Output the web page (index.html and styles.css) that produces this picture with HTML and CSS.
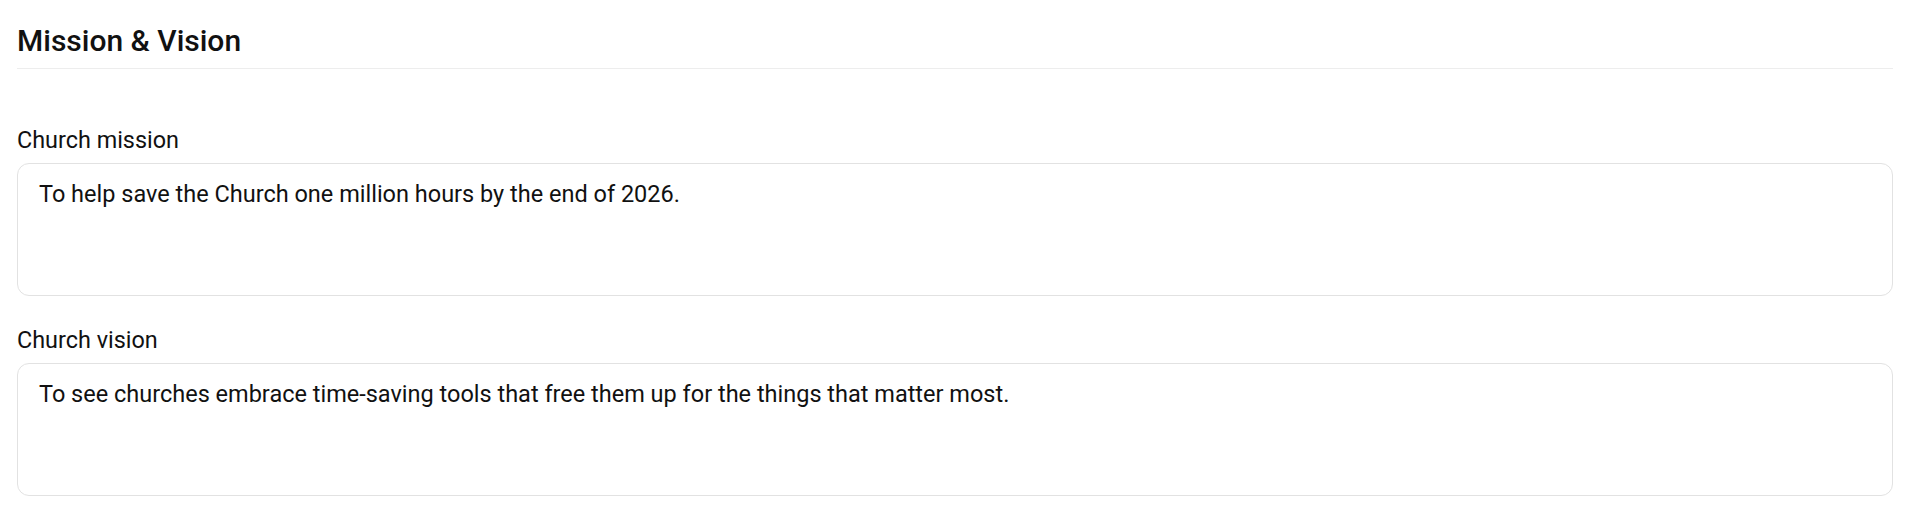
FILE: index.html
```html
<!DOCTYPE html>
<html lang="en">
<head>
  <meta charset="UTF-8">
  <meta name="viewport" content="width=device-width, initial-scale=1.0">
  <title>Mission &amp; Vision</title>
  <link rel="stylesheet" href="styles.css">
</head>
<body>
  <div class="section">
    <h2 class="section-title">Mission &amp; Vision</h2>

    <div class="field first">
      <label for="church-mission">Church mission</label>
      <textarea id="church-mission" readonly>To help save the Church one million hours by the end of 2026.</textarea>
    </div>

    <div class="field">
      <label for="church-vision">Church vision</label>
      <textarea id="church-vision" readonly>To see churches embrace time-saving tools that free them up for the things that matter most.</textarea>
    </div>
  </div>
</body>
</html>
```

FILE: styles.css
```css
body {
  font-family: Roboto, "Noto Sans", Arial, sans-serif;
  background-color: #fff;
  color: #111;
  margin: 0;
  padding: 0;
}
.section {
  padding: 0 27px 0 17px;
}
.section-title {
  margin: 0;
  padding: 23px 0 9px;
  font-size: 30px;
  line-height: 36px;
  font-weight: 500;
  color: #111;
  border-bottom: 1px solid #ededed;
}
.field {
  display: flex;
  flex-direction: column;
  margin-top: 30px;
}
.field.first {
  margin-top: 57px;
}
.field label {
  font-size: 23.4px;
  line-height: 28px;
  margin-bottom: 9px;
}
.field textarea {
  box-sizing: border-box;
  height: 133px;
  padding: 14px 21px;
  font-family: inherit;
  font-size: 23.5px;
  line-height: 32px;
  color: #111;
  background-color: #fff;
  border: 1px solid #e2e2e2;
  border-radius: 12px;
  resize: none;
  outline: none;
}
```
